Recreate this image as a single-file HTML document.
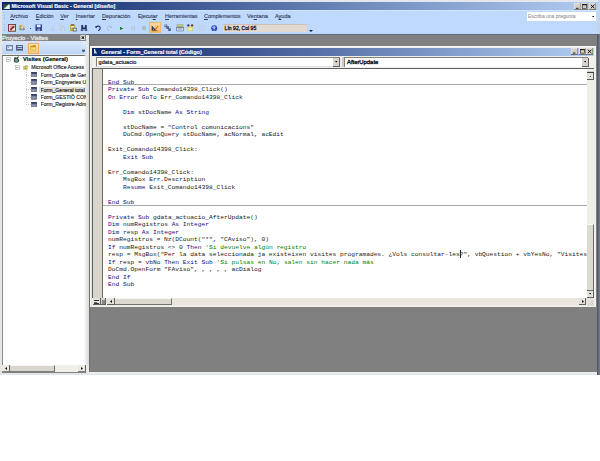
<!DOCTYPE html>
<html><head><meta charset="utf-8">
<style>
html,body{margin:0;padding:0;width:600px;height:461px;overflow:hidden;background:#fff;}
*{box-sizing:border-box;}
.a{position:absolute;}
.s{font-family:"Liberation Sans",sans-serif;white-space:pre;}
.m{font-family:"Liberation Mono",monospace;white-space:pre;}
.c{font-size:6.24px;line-height:7.5px;height:7.5px;color:#181818;}
.k{color:#10107A}
.g{color:#008000}
</style></head><body>
<div class="a" style="left:0.00px;top:0.00px;width:600.00px;height:374.50px;background:#DCE4EC;"></div>
<div class="a" style="left:0.00px;top:0.00px;width:600.00px;height:1.60px;background:#E4E8EC;"></div>
<div class="a" style="left:1.50px;top:1.90px;width:596.00px;height:7.90px;background:linear-gradient(to right,#0A246A 0%,#B2CEF2 100%);"></div>
<svg class="a" style="left:3.3px;top:3.5px;" width="6.8" height="5.6" viewBox="0 0 16 13"><rect x="0" y="0" width="16" height="13" fill="#2A4A3A"/><path d="M0 13 L13 1 L16 1 L16 13Z" fill="#F0F4EC"/><path d="M2 10 L10 3 L12 3 L4 11Z" fill="#8AB890"/></svg>
<div class="a s" style="left:11.50px;top:3.69px;font-size:5.357px;line-height:5.357px;color:#fff;font-weight:bold;-webkit-text-stroke:0.12px;">Microsoft Visual Basic - General [diseño]</div>
<svg class="a" style="left:573.50px;top:2.5px;" width="7.3" height="7" viewBox="0 0 16 16" preserveAspectRatio="none"><rect x="0" y="0" width="16" height="16" fill="#D4D0C8"/><path d="M0 16 V0 H16" stroke="#fff" stroke-width="1.5" fill="none"/><path d="M0 15.3 H15.3 V0" stroke="#404040" stroke-width="1.5" fill="none"/><rect x="4" y="11" width="6" height="2" fill="#000"/></svg>
<svg class="a" style="left:581.15px;top:2.5px;" width="7.3" height="7" viewBox="0 0 16 16" preserveAspectRatio="none"><rect x="0" y="0" width="16" height="16" fill="#D4D0C8"/><path d="M0 16 V0 H16" stroke="#fff" stroke-width="1.5" fill="none"/><path d="M0 15.3 H15.3 V0" stroke="#404040" stroke-width="1.5" fill="none"/><rect x="3.5" y="3.5" width="9" height="8.5" fill="none" stroke="#000" stroke-width="1.2"/><rect x="3.5" y="3" width="9" height="2" fill="#000"/></svg>
<svg class="a" style="left:588.80px;top:2.5px;" width="7.3" height="7" viewBox="0 0 16 16" preserveAspectRatio="none"><rect x="0" y="0" width="16" height="16" fill="#D4D0C8"/><path d="M0 16 V0 H16" stroke="#fff" stroke-width="1.5" fill="none"/><path d="M0 15.3 H15.3 V0" stroke="#404040" stroke-width="1.5" fill="none"/><path d="M4 4 L12 12 M12 4 L4 12" stroke="#000" stroke-width="2"/></svg>
<div class="a" style="left:1.50px;top:10.00px;width:596.00px;height:23.60px;background:#BFD9FC;"></div>
<div class="a" style="left:1.50px;top:10.00px;width:596.00px;height:0.80px;background:#D2E4FC;"></div>
<div class="a" style="left:1.50px;top:33.50px;width:596.00px;height:1.00px;background:#5C6C7C;"></div>
<div class="a" style="left:3.8px;top:12px;width:1.2px;height:7.5px;background:repeating-linear-gradient(#A8BCE0 0 0.8px,transparent 0.8px 1.6px);"></div>
<div class="a" style="left:3.8px;top:24px;width:1.2px;height:8px;background:repeating-linear-gradient(#A8BCE0 0 0.8px,transparent 0.8px 1.6px);"></div>
<div class="a" style="left:0.00px;top:10.00px;width:1.80px;height:24.00px;background:#E2E4E8;"></div>
<div class="a s" style="left:10.30px;top:14.49px;font-size:5.308px;line-height:5.308px;color:#303A58;-webkit-text-stroke:0.25px;-webkit-text-stroke:0.12px;"><u>A</u>rchivo</div>
<div class="a s" style="left:35.80px;top:14.48px;font-size:5.458px;line-height:5.458px;color:#303A58;-webkit-text-stroke:0.25px;-webkit-text-stroke:0.12px;"><u>E</u>dición</div>
<div class="a s" style="left:60.30px;top:14.46px;font-size:5.596px;line-height:5.596px;color:#303A58;-webkit-text-stroke:0.25px;-webkit-text-stroke:0.12px;"><u>V</u>er</div>
<div class="a s" style="left:75.80px;top:14.45px;font-size:5.663px;line-height:5.663px;color:#303A58;-webkit-text-stroke:0.25px;-webkit-text-stroke:0.12px;"><u>I</u>nsertar</div>
<div class="a s" style="left:102.00px;top:14.46px;font-size:5.573px;line-height:5.573px;color:#303A58;-webkit-text-stroke:0.25px;-webkit-text-stroke:0.12px;"><u>D</u>epuración</div>
<div class="a s" style="left:138.00px;top:14.49px;font-size:5.316px;line-height:5.316px;color:#303A58;-webkit-text-stroke:0.25px;-webkit-text-stroke:0.12px;">Ejecut<u>a</u>r</div>
<div class="a s" style="left:165.00px;top:14.48px;font-size:5.415px;line-height:5.415px;color:#303A58;-webkit-text-stroke:0.25px;-webkit-text-stroke:0.12px;"><u>H</u>erramientas</div>
<div class="a s" style="left:204.00px;top:14.48px;font-size:5.427px;line-height:5.427px;color:#303A58;-webkit-text-stroke:0.25px;-webkit-text-stroke:0.12px;"><u>C</u>omplementos</div>
<div class="a s" style="left:247.00px;top:14.44px;font-size:5.721px;line-height:5.721px;color:#303A58;-webkit-text-stroke:0.25px;-webkit-text-stroke:0.12px;">Ve<u>n</u>tana</div>
<div class="a s" style="left:275.00px;top:14.47px;font-size:5.502px;line-height:5.502px;color:#303A58;-webkit-text-stroke:0.25px;-webkit-text-stroke:0.12px;">A<u>y</u>uda</div>
<div class="a" style="left:527.00px;top:12.00px;width:68.50px;height:8.50px;background:#fff;"></div>
<div class="a s" style="left:528.00px;top:14.03px;font-size:5.007px;line-height:5.007px;color:#8C8C8C;-webkit-text-stroke:0.25px;-webkit-text-stroke:0.05px;">Escriba una pregunta</div>
<svg class="a" style="left:591.5px;top:15.5px;" width="2.6" height="1.6" viewBox="0 0 4 2.4"><path d="M0 0 H4 L2 2.4Z" fill="#101020"/></svg>
<svg class="a" style="left:7.7px;top:24.2px;" width="8" height="7.6" viewBox="0 0 16 16"><rect x="0.8" y="0.8" width="14.4" height="14.4" fill="#F0E0E0" stroke="#6A2020" stroke-width="1.8"/><path d="M3 13 C5 8 8 4 13 3 L13 8 C10 9 8 11 7 13Z" fill="#8A2424"/><path d="M3 3 H11 L3 10Z" fill="#D8A8A8"/></svg>
<svg class="a" style="left:18.3px;top:24.3px;" width="8" height="7.4" viewBox="0 0 16 16"><circle cx="5" cy="5" r="3.5" fill="#C8B040"/><circle cx="11" cy="5" r="3.2" fill="#D8C8A0"/><circle cx="5" cy="11" r="3.2" fill="#70A070"/><circle cx="11" cy="11" r="3.2" fill="#A080B0"/><circle cx="8" cy="8" r="2.2" fill="#E8E0B0"/></svg>
<div class="a" style="left:29.60px;top:27.60px;width:1.50px;height:1.50px;background:#1A1A3A;border-radius:0.5px;"></div>
<svg class="a" style="left:35px;top:24.3px;" width="7.4" height="7.4" viewBox="0 0 16 16"><path d="M1 1H15V15H1Z" fill="#2C3C8C"/><rect x="4" y="1.5" width="8" height="5.5" fill="#E8ECF8"/><rect x="5" y="10" width="6" height="5" fill="#8A9AC8"/></svg>
<svg class="a" style="left:50.2px;top:24.8px;" width="5" height="6.6" viewBox="0 0 16 16"><path d="M3 1 L8 10 M13 1 L8 10" stroke="#B8C4D4" stroke-width="2" fill="none"/><circle cx="5" cy="13" r="2.5" fill="none" stroke="#B8C4D4" stroke-width="1.6"/><circle cx="11" cy="13" r="2.5" fill="none" stroke="#B8C4D4" stroke-width="1.6"/></svg>
<svg class="a" style="left:59px;top:24.8px;" width="6.5" height="6.6" viewBox="0 0 16 16"><rect x="1" y="1" width="8" height="10" fill="#D0DAE6" stroke="#B8C4D4"/><rect x="6" y="5" width="8" height="10" fill="#D0DAE6" stroke="#A8B4C4"/></svg>
<svg class="a" style="left:69px;top:24.2px;" width="8.6" height="7.6" viewBox="0 0 16 16"><rect x="1" y="2" width="11" height="13" fill="#C8A848"/><rect x="3" y="0.5" width="7" height="3" fill="#6A5A30"/><rect x="3" y="4" width="7" height="4" fill="#F0E0A0"/><rect x="7" y="8" width="8" height="7.5" fill="#404858"/><rect x="8.5" y="9.5" width="5" height="4.5" fill="#E8ECF0"/></svg>
<svg class="a" style="left:80.3px;top:24.4px;" width="8" height="7.2" viewBox="0 0 16 16"><path d="M2 2H6V6H7V9H9V6H10V2H14V9L15.5 15H9.5V11H6.5V15H0.5L2 9Z" fill="#1E2C64"/><rect x="2.5" y="11" width="2.5" height="2" fill="#8A9AD0"/><rect x="11" y="11" width="2.5" height="2" fill="#8A9AD0"/></svg>
<svg class="a" style="left:95px;top:24.8px;" width="6.4" height="6.6" viewBox="0 0 16 16"><path d="M2.5 6 C3 1.5 12.5 1 13 6.5 C13.3 10 11 12.5 8 14" stroke="#1E2E6A" stroke-width="2.8" fill="none"/><path d="M0 3 L5.5 3 L3 8.5Z" fill="#1E2E6A"/></svg>
<svg class="a" style="left:105.6px;top:24.8px;" width="6" height="6.6" viewBox="0 0 16 16"><path d="M13.5 6 C13 1.5 3.5 1 3 6.5 C2.7 10 5 12.5 8 14" stroke="#A8B4C4" stroke-width="2.4" fill="none"/><path d="M16 3 L10.5 3 L13 8.5Z" fill="#A8B4C4"/></svg>
<svg class="a" style="left:120.2px;top:25.8px;" width="3.4" height="4.8" viewBox="0 0 16 16"><path d="M0 0 L16 8 L0 16Z" fill="#1A7A2A"/></svg>
<svg class="a" style="left:131px;top:26px;" width="4.4" height="4.6" viewBox="0 0 16 16"><rect x="1" y="0" width="5" height="16" fill="#B8C4D4"/><rect x="10" y="0" width="5" height="16" fill="#B8C4D4"/></svg>
<svg class="a" style="left:142px;top:26.2px;" width="4.2" height="4.2" viewBox="0 0 16 16"><rect x="0" y="0" width="16" height="16" fill="#B0BCCC"/></svg>
<div class="a" style="left:149.00px;top:22.40px;width:11.50px;height:10.80px;background:linear-gradient(#FAD8A0,#F6C070);border:0.5px solid #E8B868;"></div>
<svg class="a" style="left:151px;top:24.3px;" width="7.8" height="7.4" viewBox="0 0 16 16"><path d="M1 15 L1 3 L13 15Z" fill="#2A3A6A"/><path d="M4 12 L4 9 L7 12Z" fill="#F6C070"/><path d="M8 11 L14 3 L16 5 L10 13 Z" fill="#E07A10"/><path d="M1 15 H16" stroke="#E08A20" stroke-width="2"/></svg>
<svg class="a" style="left:164.4px;top:24.4px;" width="7.4" height="7.4" viewBox="0 0 16 16"><path d="M1 1 H7 V5 H11 V9 H15 V15 H9 V11 H5 V7 H1Z" fill="#5A6488"/><rect x="2" y="2" width="3" height="2" fill="#C8D0E8"/></svg>
<svg class="a" style="left:175.8px;top:24.4px;" width="8" height="7.4" viewBox="0 0 16 16"><rect x="1" y="1" width="14" height="6" fill="#8A9A50"/><rect x="2" y="2" width="12" height="3" fill="#C8D088"/><rect x="1" y="8" width="14" height="7" fill="#F0F4FC" stroke="#3A4A7A" stroke-width="1.2"/><rect x="3" y="10" width="10" height="1.5" fill="#3A4A7A"/></svg>
<svg class="a" style="left:186.4px;top:24.3px;" width="8.4" height="7.6" viewBox="0 0 16 16"><circle cx="4" cy="3" r="2.5" fill="#3A3A5A"/><circle cx="12" cy="3" r="2.5" fill="#5A3A3A"/><path d="M2 6 H14 L13 15 H3Z" fill="#D8D060"/><path d="M4 8 H12 L11.5 13 H4.5Z" fill="#F4F0A0"/></svg>
<svg class="a" style="left:197.6px;top:25px;" width="8" height="6.4" viewBox="0 0 16 16"><path d="M2 4 L8 1 L14 4 L14 14 L2 14Z" fill="none" stroke="#C0CCDA" stroke-width="1.6"/><path d="M5 8 H11" stroke="#C0CCDA" stroke-width="1.6"/></svg>
<svg class="a" style="left:211.4px;top:24.6px;" width="6.4" height="6.6" viewBox="0 0 16 16"><circle cx="8" cy="8" r="7.5" fill="#2A4AB8"/><circle cx="6.5" cy="6" r="3" fill="#7A9AE8"/><path d="M6 6 C6 3.5 10 3.5 10 6 C10 8 8 8 8 10" stroke="#fff" stroke-width="1.8" fill="none"/><rect x="7" y="11.5" width="2" height="2" fill="#fff"/></svg>
<div class="a" style="left:222.60px;top:23.90px;width:84.40px;height:8.00px;background:#E2DAD0;border-top:0.6px solid #C8C0B8;"></div>
<div class="a s" style="left:224.60px;top:25.92px;font-size:5.091px;line-height:5.091px;color:#181818;-webkit-text-stroke:0.25px;-webkit-text-stroke:0.3px;">Lín 92, Col 95</div>
<div class="a" style="left:309px;top:29.6px;width:0;height:0;border-left:2px solid transparent;border-right:2px solid transparent;border-top:2px solid #202040;"></div>
<div class="a" style="left:88.80px;top:34.50px;width:508.00px;height:337.70px;background:#808080;"></div>
<div class="a" style="left:597.50px;top:0.00px;width:2.50px;height:34.00px;background:#C4D4EC;"></div>
<div class="a" style="left:596.60px;top:34.00px;width:0.80px;height:340.50px;background:#EEEEEE;"></div>
<div class="a" style="left:597.40px;top:34.00px;width:2.60px;height:340.50px;background:linear-gradient(to right,#4A5260,#7A8290);"></div>
<div class="a" style="left:0.00px;top:372.20px;width:596.50px;height:2.10px;background:#ECECEA;"></div>
<div class="a" style="left:0.00px;top:34.50px;width:88.80px;height:339.50px;background:#E4E6E8;"></div>
<div class="a" style="left:84.60px;top:54.50px;width:3.90px;height:310.00px;background:linear-gradient(to right,#F4F4F2,#DEDEDA);"></div>
<div class="a" style="left:86.20px;top:34.50px;width:2.30px;height:20.00px;background:#E6E6E4;"></div>
<div class="a" style="left:86.20px;top:364.50px;width:2.30px;height:9.50px;background:#E6E6E4;"></div>
<div class="a" style="left:88.60px;top:34.50px;width:1.00px;height:337.70px;background:#6E6E6E;"></div>
<div class="a" style="left:1.50px;top:34.10px;width:84.50px;height:6.50px;background:#808080;"></div>
<div class="a s" style="left:2.00px;top:35.72px;font-size:5.926px;line-height:5.926px;color:#E4E4E4;-webkit-text-stroke:0.25px;-webkit-text-stroke:0.3px;">Proyecto - Visites</div>
<svg class="a" style="left:79.5px;top:34.9px;" width="5.8" height="5.2" viewBox="0 0 16 16"><rect x="0.5" y="0.5" width="15" height="15" fill="#F4F4F0" stroke="#C8C8C8"/><path d="M4 4 L12 12 M12 4 L4 12" stroke="#202818" stroke-width="3.6"/></svg>
<div class="a" style="left:1.50px;top:40.60px;width:84.50px;height:13.90px;background:linear-gradient(#D8E8FC,#BCD4F6);"></div>
<div class="a" style="left:80.50px;top:40.60px;width:5.50px;height:13.90px;background:linear-gradient(#E0ECFC,#C4D8F8);"></div>
<svg class="a" style="left:5.6px;top:45px;" width="7.2" height="5.5" viewBox="0 0 16 12"><rect x="0.5" y="0.5" width="15" height="11" fill="#7A90B8" stroke="#4A5A80"/><rect x="3" y="3" width="10" height="6" fill="#E4EAF6"/><rect x="4" y="4" width="3" height="2" fill="#7A90B8"/></svg>
<svg class="a" style="left:16px;top:45px;" width="7.2" height="5.5" viewBox="0 0 16 12"><rect x="0.5" y="0.5" width="15" height="11" fill="#4A5A80" stroke="#3A4A70"/><rect x="3" y="2.5" width="11" height="2" fill="#E4EAF6"/><rect x="3" y="6.5" width="11" height="2" fill="#C4CCE0"/></svg>
<div class="a" style="left:28.00px;top:42.50px;width:11.00px;height:11.00px;background:linear-gradient(#FBE4B4,#F6C878);border:0.7px solid #E8B060;"></div>
<svg class="a" style="left:30.3px;top:45.3px;" width="6.5" height="5.6" viewBox="0 0 16 14"><path d="M1 2 H6 L7.5 0.5 H15 V13 H1Z" fill="#C88A20"/><path d="M1 5 H15 V13 H1Z" fill="#F4C040"/><path d="M3 7 H13 V11 H3Z" fill="#FCE088"/></svg>
<svg class="a" style="left:82px;top:48.8px;" width="3" height="3.4" viewBox="0 0 6 7"><path d="M0 0 H6 M0 3 L3 6.5 L6 3Z" stroke="#2A3A6A" stroke-width="1.2" fill="#2A3A6A"/></svg>
<div class="a" style="left:1.80px;top:54.50px;width:84.20px;height:310.00px;background:#fff;border-left:0.9px solid #8A8A8A;border-top:0.9px solid #707070;"></div>
<div class="a" style="left:84.40px;top:54.50px;width:1.20px;height:310.00px;background:linear-gradient(to right,rgba(255,255,255,0),#ECECEA);"></div>
<svg class="a" style="left:6px;top:57.2px;" width="4.7" height="4.8" viewBox="0 0 16 16"><rect x="1" y="1" width="14" height="14" fill="#fff" stroke="#A8A8A8" stroke-width="2"/><rect x="4" y="7" width="8" height="2.2" fill="#707070"/></svg>
<svg class="a" style="left:13px;top:55.8px;" width="7.2" height="7" viewBox="0 0 16 16"><path d="M2 6 C2 3 6 2 8 4 L12 0.5 L13.5 2 L11 5 C13 7 14 9 14 11 C14 14 11 15.5 8 15.5 C4 15.5 1.5 14 1.5 11Z" fill="#3A4A48"/><path d="M4 8 C5 6 10 6 11 8 C12 11 10 13.5 7.5 13.5 C5 13.5 3.5 11 4 8Z" fill="#7A9A90"/></svg>
<div class="a s" style="left:23.00px;top:57.15px;font-size:5.690px;line-height:5.690px;color:#000;font-weight:bold;-webkit-text-stroke:0.12px;-webkit-text-stroke:0.15px;">Visites (General)</div>
<svg class="a" style="left:14.8px;top:65px;" width="4.8" height="4.8" viewBox="0 0 16 16"><rect x="1" y="1" width="14" height="14" fill="#fff" stroke="#A8A8A8" stroke-width="2"/><rect x="4" y="7" width="8" height="2.2" fill="#707070"/></svg>
<svg class="a" style="left:22.4px;top:64.6px;" width="7" height="5.2" viewBox="0 0 16 16"><path d="M1 3 H6 L7.5 1 H15 V15 H1Z" fill="#B8B060"/><path d="M2 6 H15 V15 H2Z" fill="#E0DC90"/><rect x="5" y="8" width="6" height="4" fill="#7A8A40"/></svg>
<div class="a s" style="left:31.20px;top:65.02px;font-size:5.100px;line-height:5.100px;color:#202020;-webkit-text-stroke:0.25px;-webkit-text-stroke:0.14px;">Microsoft Office Access</div>
<div class="a" style="left:26.3px;top:70px;width:0;height:35px;border-left:0.7px dotted #D0D0D0;"></div>
<div class="a" style="left:39.30px;top:86.60px;width:45.90px;height:6.80px;background:#E2E1DC;"></div>
<div class="a" style="left:26.3px;top:74.50px;width:5px;height:0;border-top:0.7px dotted #D0D0D0;"></div>
<svg class="a" style="left:31.3px;top:71.7px;" width="6.2" height="5.6" viewBox="0 0 16 16"><rect x="0.5" y="0.5" width="15" height="15" fill="#A0A8BC" stroke="#303850" stroke-width="1.4"/><rect x="0.5" y="0.5" width="15" height="4.5" fill="#283058"/><rect x="3" y="7" width="3" height="2" fill="#303850"/><rect x="3" y="11" width="3" height="2" fill="#303850"/><rect x="8" y="7" width="6" height="2" fill="#5A6280"/><rect x="8" y="11" width="6" height="2" fill="#5A6280"/></svg>
<div class="a s" style="left:40.50px;top:72.61px;font-size:5.150px;line-height:5.150px;color:#181818;-webkit-text-stroke:0.25px;-webkit-text-stroke:0.14px;width:45.2px;overflow:hidden;padding-top:2px;margin-top:-2px;padding-bottom:1px;">Form_Copia de Gen</div>
<div class="a" style="left:26.3px;top:81.95px;width:5px;height:0;border-top:0.7px dotted #D0D0D0;"></div>
<svg class="a" style="left:31.3px;top:79.15px;" width="6.2" height="5.6" viewBox="0 0 16 16"><rect x="0.5" y="0.5" width="15" height="15" fill="#A0A8BC" stroke="#303850" stroke-width="1.4"/><rect x="0.5" y="0.5" width="15" height="4.5" fill="#283058"/><rect x="3" y="7" width="3" height="2" fill="#303850"/><rect x="3" y="11" width="3" height="2" fill="#303850"/><rect x="8" y="7" width="6" height="2" fill="#5A6280"/><rect x="8" y="11" width="6" height="2" fill="#5A6280"/></svg>
<div class="a s" style="left:40.50px;top:80.06px;font-size:5.150px;line-height:5.150px;color:#181818;-webkit-text-stroke:0.25px;-webkit-text-stroke:0.14px;width:45.2px;overflow:hidden;padding-top:2px;margin-top:-2px;padding-bottom:1px;">Form_Engnyeries U</div>
<div class="a" style="left:26.3px;top:89.40px;width:5px;height:0;border-top:0.7px dotted #D0D0D0;"></div>
<svg class="a" style="left:31.3px;top:86.60000000000001px;" width="6.2" height="5.6" viewBox="0 0 16 16"><rect x="0.5" y="0.5" width="15" height="15" fill="#A0A8BC" stroke="#303850" stroke-width="1.4"/><rect x="0.5" y="0.5" width="15" height="4.5" fill="#283058"/><rect x="3" y="7" width="3" height="2" fill="#303850"/><rect x="3" y="11" width="3" height="2" fill="#303850"/><rect x="8" y="7" width="6" height="2" fill="#5A6280"/><rect x="8" y="11" width="6" height="2" fill="#5A6280"/></svg>
<div class="a s" style="left:40.50px;top:87.51px;font-size:5.150px;line-height:5.150px;color:#181818;-webkit-text-stroke:0.25px;-webkit-text-stroke:0.14px;width:45.2px;overflow:hidden;padding-top:2px;margin-top:-2px;padding-bottom:1px;">Form_General total</div>
<div class="a" style="left:26.3px;top:96.85px;width:5px;height:0;border-top:0.7px dotted #D0D0D0;"></div>
<svg class="a" style="left:31.3px;top:94.05px;" width="6.2" height="5.6" viewBox="0 0 16 16"><rect x="0.5" y="0.5" width="15" height="15" fill="#A0A8BC" stroke="#303850" stroke-width="1.4"/><rect x="0.5" y="0.5" width="15" height="4.5" fill="#283058"/><rect x="3" y="7" width="3" height="2" fill="#303850"/><rect x="3" y="11" width="3" height="2" fill="#303850"/><rect x="8" y="7" width="6" height="2" fill="#5A6280"/><rect x="8" y="11" width="6" height="2" fill="#5A6280"/></svg>
<div class="a s" style="left:40.50px;top:94.96px;font-size:5.150px;line-height:5.150px;color:#181818;-webkit-text-stroke:0.25px;-webkit-text-stroke:0.14px;width:45.2px;overflow:hidden;padding-top:2px;margin-top:-2px;padding-bottom:1px;">Form_GESTIÓ CONT</div>
<div class="a" style="left:26.3px;top:104.30px;width:5px;height:0;border-top:0.7px dotted #D0D0D0;"></div>
<svg class="a" style="left:31.3px;top:101.5px;" width="6.2" height="5.6" viewBox="0 0 16 16"><rect x="0.5" y="0.5" width="15" height="15" fill="#A0A8BC" stroke="#303850" stroke-width="1.4"/><rect x="0.5" y="0.5" width="15" height="4.5" fill="#283058"/><rect x="3" y="7" width="3" height="2" fill="#303850"/><rect x="3" y="11" width="3" height="2" fill="#303850"/><rect x="8" y="7" width="6" height="2" fill="#5A6280"/><rect x="8" y="11" width="6" height="2" fill="#5A6280"/></svg>
<div class="a s" style="left:40.50px;top:102.41px;font-size:5.150px;line-height:5.150px;color:#181818;-webkit-text-stroke:0.25px;-webkit-text-stroke:0.14px;width:45.2px;overflow:hidden;padding-top:2px;margin-top:-2px;padding-bottom:1px;">Form_Registre Adm</div>
<div class="a" style="left:85.60px;top:54.80px;width:3.00px;height:309.70px;background:linear-gradient(to right,#E8E8E6,#DCDCD8);"></div>
<div class="a" style="left:85.60px;top:364.50px;width:3.00px;height:9.50px;background:#E8E8E6;"></div>
<div class="a" style="left:2.20px;top:364.50px;width:84.10px;height:7.80px;background:#F0EFEA;"></div>
<div class="a" style="left:2.40px;top:364.70px;width:7.20px;height:7.40px;background:#ECEAE2;border-right:0.8px solid #606060;border-bottom:0.8px solid #808080;"></div>
<div class="a" style="left:9.60px;top:364.70px;width:45.20px;height:7.40px;background:#D8D6CE;border-right:0.9px solid #6A6A6A;border-bottom:0.8px solid #808080;border-top:0.6px solid #F4F4F4;"></div>
<svg class="a" style="left:5.2px;top:366.8px;" width="2" height="3" viewBox="0 0 2.5 4"><path d="M2.5 0 V4 L0 2Z" fill="#000"/></svg>
<div class="a" style="left:78.20px;top:364.70px;width:7.60px;height:7.40px;background:#ECEAE2;border-right:0.8px solid #606060;border-bottom:0.8px solid #808080;"></div>
<svg class="a" style="left:80.8px;top:366.8px;" width="2" height="3" viewBox="0 0 2.5 4"><path d="M0 0 V4 L2.5 2Z" fill="#000"/></svg>
<div class="a" style="left:1.80px;top:372.10px;width:84.70px;height:0.80px;background:#808080;"></div>
<div class="a" style="left:90.20px;top:45.80px;width:505.80px;height:261.60px;background:#F0EFEA;"></div>
<div class="a" style="left:90.20px;top:45.80px;width:505.80px;height:1.00px;background:#F8F8F8;"></div>
<div class="a" style="left:90.20px;top:45.80px;width:0.80px;height:261.60px;background:#F4F4F2;"></div>
<div class="a" style="left:90.60px;top:55.70px;width:1.70px;height:251.70px;background:#E0E0DC;"></div>
<div class="a" style="left:92.00px;top:47.50px;width:501.50px;height:8.20px;background:linear-gradient(to right,#0A246A 0%,#B2CEF2 100%);"></div>
<svg class="a" style="left:94px;top:49.2px;" width="3.4" height="4.6" viewBox="0 0 8 11"><path d="M0 0 H3 V4 H5 V7 H8 V11 H0Z" fill="#D8DCE8"/><path d="M4 8 H7 V10 H4Z" fill="#5A6A9A"/></svg>
<div class="a s" style="left:101.00px;top:49.66px;font-size:5.559px;line-height:5.559px;color:#fff;font-weight:bold;-webkit-text-stroke:0.12px;">General - Form_General total (Código)</div>
<svg class="a" style="left:571.00px;top:48.1px;" width="7.2" height="6.8" viewBox="0 0 16 16" preserveAspectRatio="none"><rect x="0" y="0" width="16" height="16" fill="#D4D0C8"/><path d="M0 16 V0 H16" stroke="#fff" stroke-width="1.5" fill="none"/><path d="M0 15.3 H15.3 V0" stroke="#404040" stroke-width="1.5" fill="none"/><rect x="4" y="11" width="6" height="2" fill="#000"/></svg>
<svg class="a" style="left:578.50px;top:48.1px;" width="7.2" height="6.8" viewBox="0 0 16 16" preserveAspectRatio="none"><rect x="0" y="0" width="16" height="16" fill="#D4D0C8"/><path d="M0 16 V0 H16" stroke="#fff" stroke-width="1.5" fill="none"/><path d="M0 15.3 H15.3 V0" stroke="#404040" stroke-width="1.5" fill="none"/><rect x="3.5" y="3.5" width="9" height="8.5" fill="none" stroke="#000" stroke-width="1.2"/><rect x="3.5" y="3" width="9" height="2" fill="#000"/></svg>
<svg class="a" style="left:586.00px;top:48.1px;" width="7.2" height="6.8" viewBox="0 0 16 16" preserveAspectRatio="none"><rect x="0" y="0" width="16" height="16" fill="#D4D0C8"/><path d="M0 16 V0 H16" stroke="#fff" stroke-width="1.5" fill="none"/><path d="M0 15.3 H15.3 V0" stroke="#404040" stroke-width="1.5" fill="none"/><path d="M4 4 L12 12 M12 4 L4 12" stroke="#000" stroke-width="2"/></svg>
<div class="a" style="left:95.80px;top:57.20px;width:244.50px;height:9.80px;background:#fff;border-top:0.9px solid #808080;border-left:0.9px solid #808080;border-bottom:0.6px solid #E0E0E0;"></div>
<div class="a s" style="left:98.60px;top:59.76px;font-size:5.558px;line-height:5.558px;color:#101010;-webkit-text-stroke:0.25px;-webkit-text-stroke:0.18px;">gdata_actuacio</div>
<div class="a" style="left:333.00px;top:57.80px;width:7.30px;height:8.80px;background:#D8D4CC;border-right:0.8px solid #606060;border-bottom:0.8px solid #606060;"></div>
<svg class="a" style="left:335.3px;top:61.4px;" width="2.6" height="1.6" viewBox="0 0 4 2.5"><path d="M0 0 H4 L2 2.5Z" fill="#000"/></svg>
<div class="a" style="left:341.50px;top:57.20px;width:2.10px;height:9.80px;background:#D0CCC4;"></div>
<div class="a" style="left:343.80px;top:57.20px;width:244.70px;height:9.80px;background:#fff;border-top:0.9px solid #808080;border-left:0.9px solid #808080;"></div>
<div class="a s" style="left:347.00px;top:59.73px;font-size:5.865px;line-height:5.865px;color:#000;-webkit-text-stroke:0.25px;-webkit-text-stroke:0.3px;">AfterUpdate</div>
<div class="a" style="left:581.50px;top:57.80px;width:7.00px;height:8.80px;background:#D8D4CC;border-right:0.8px solid #606060;border-bottom:0.8px solid #606060;"></div>
<svg class="a" style="left:583.6px;top:61.4px;" width="2.6" height="1.6" viewBox="0 0 4 2.5"><path d="M0 0 H4 L2 2.5Z" fill="#000"/></svg>
<div class="a" style="left:92.30px;top:68.20px;width:501.70px;height:237.40px;background:#fff;border-top:0.9px solid #606060;border-left:0.9px solid #606060;"></div>
<div class="a" style="left:93.20px;top:69.10px;width:9.80px;height:229.10px;background:#D8D5CC;border-right:0.8px solid #6A6A6A;"></div>
<div class="a" style="left:103.00px;top:84.30px;width:483.50px;height:0.70px;background:#A8A8A8;"></div>
<div class="a" style="left:103.00px;top:204.50px;width:483.50px;height:0.70px;background:#A8A8A8;"></div>
<div class="a" style="left:586.50px;top:69.40px;width:7.50px;height:228.80px;background:#EEEDE6;"></div>
<div class="a" style="left:586.50px;top:71.20px;width:7.50px;height:1.40px;background:#D4D0C8;border-bottom:0.7px solid #404040;"></div>
<div class="a" style="left:586.50px;top:73.00px;width:7.10px;height:7.20px;background:#E4E2DA;border-right:0.8px solid #606060;border-bottom:0.8px solid #606060;"></div>
<svg class="a" style="left:588.8px;top:75.8px;" width="2.6" height="1.6" viewBox="0 0 4 2.5"><path d="M0 2.5 H4 L2 0Z" fill="#000"/></svg>
<div class="a" style="left:586.50px;top:224.00px;width:7.30px;height:66.60px;background:#DCD9D0;border-right:0.9px solid #6A6A6A;border-bottom:0.8px solid #6A6A6A;border-top:0.6px solid #F8F8F4;"></div>
<div class="a" style="left:586.50px;top:290.50px;width:7.10px;height:7.30px;background:#E4E2DA;border-right:0.8px solid #606060;border-bottom:0.8px solid #606060;"></div>
<svg class="a" style="left:588.8px;top:293.3px;" width="2.6" height="1.6" viewBox="0 0 4 2.5"><path d="M0 0 H4 L2 2.5Z" fill="#000"/></svg>
<div class="a" style="left:92.30px;top:298.20px;width:494.20px;height:7.40px;background:#EEEDE6;"></div>
<div class="a" style="left:93.00px;top:298.40px;width:7.50px;height:6.90px;background:#E4E2DA;border-right:0.8px solid #606060;border-bottom:0.8px solid #606060;"></div>
<div class="a" style="left:94.30px;top:300.20px;width:4.70px;height:0.70px;background:#303030;"></div>
<div class="a" style="left:94.30px;top:301.60px;width:3.20px;height:0.60px;background:#707070;"></div>
<div class="a" style="left:94.30px;top:302.90px;width:4.70px;height:0.70px;background:#303030;"></div>
<div class="a" style="left:100.80px;top:298.40px;width:5.70px;height:6.90px;background:#D8D5CC;border-right:0.8px solid #606060;border-bottom:0.8px solid #606060;"></div>
<div class="a" style="left:102.00px;top:300.00px;width:3.00px;height:4.00px;background:#8a8a8a;"></div>
<div class="a" style="left:106.80px;top:298.40px;width:8.00px;height:6.90px;background:#E4E2DA;border-right:0.8px solid #606060;border-bottom:0.8px solid #606060;"></div>
<svg class="a" style="left:110px;top:300.3px;" width="2" height="3" viewBox="0 0 2.5 4"><path d="M2.5 0 V4 L0 2Z" fill="#000"/></svg>
<div class="a" style="left:115.00px;top:298.40px;width:471.50px;height:6.90px;background:#E8E6DE;"></div>
<div class="a" style="left:114.80px;top:298.40px;width:57.70px;height:6.90px;background:#DCD9D0;border-right:0.8px solid #707070;border-bottom:0.8px solid #707070;border-top:0.6px solid #F8F8F8;"></div>
<div class="a" style="left:578.50px;top:298.40px;width:7.80px;height:6.90px;background:#E4E2DA;border-right:0.8px solid #606060;border-bottom:0.8px solid #606060;"></div>
<svg class="a" style="left:581.6px;top:300.3px;" width="2" height="3" viewBox="0 0 2.5 4"><path d="M0 0 V4 L2.5 2Z" fill="#000"/></svg>
<div class="a" style="left:586.50px;top:298.20px;width:7.50px;height:7.40px;background:#E4E2DA;"></div>
<svg class="a" style="left:587px;top:298.6px;" width="6.6" height="6.6" viewBox="0 0 12 12"><path d="M11 3 L3 11 M11 7 L7 11 M11 10 L10 11" stroke="#909090" stroke-width="1"/><path d="M11 4 L4 11 M11 8 L8 11" stroke="#fff" stroke-width="0.8"/></svg>
<div class="a" style="left:102.5px;top:69.4px;width:484px;height:228.8px;overflow:hidden;">
<div class="a m c" style="left:5.50px;top:9.20px;"><span class="k">End</span> <span class="k">Sub</span></div>
<div class="a m c" style="left:5.50px;top:16.70px;"><span class="k">Private</span> <span class="k">Sub</span> Comando14398_Click()</div>
<div class="a m c" style="left:5.50px;top:24.20px;"><span class="k">On</span> <span class="k">Error</span> <span class="k">GoTo</span> Err_Comando14398_Click</div>
<div class="a m c" style="left:5.50px;top:39.20px;">    <span class="k">Dim</span> stDocName <span class="k">As</span> <span class="k">String</span></div>
<div class="a m c" style="left:5.50px;top:54.20px;">    stDocName = &quot;Control comunicacions&quot;</div>
<div class="a m c" style="left:5.50px;top:61.70px;">    DoCmd.OpenQuery stDocName, acNormal, acEdit</div>
<div class="a m c" style="left:5.50px;top:76.70px;">Exit_Comando14398_Click:</div>
<div class="a m c" style="left:5.50px;top:84.20px;">    <span class="k">Exit</span> <span class="k">Sub</span></div>
<div class="a m c" style="left:5.50px;top:99.20px;">Err_Comando14398_Click:</div>
<div class="a m c" style="left:5.50px;top:106.70px;">    MsgBox Err.Description</div>
<div class="a m c" style="left:5.50px;top:114.20px;">    <span class="k">Resume</span> Exit_Comando14398_Click</div>
<div class="a m c" style="left:5.50px;top:129.20px;"><span class="k">End</span> <span class="k">Sub</span></div>
<div class="a m c" style="left:5.50px;top:144.20px;"><span class="k">Private</span> <span class="k">Sub</span> gdata_actuacio_AfterUpdate()</div>
<div class="a m c" style="left:5.50px;top:151.70px;"><span class="k">Dim</span> numRegistros <span class="k">As</span> <span class="k">Integer</span></div>
<div class="a m c" style="left:5.50px;top:159.20px;"><span class="k">Dim</span> resp <span class="k">As</span> <span class="k">Integer</span></div>
<div class="a m c" style="left:5.50px;top:166.70px;">numRegistros = Nz(DCount(&quot;*&quot;, &quot;CAviso&quot;), 0)</div>
<div class="a m c" style="left:5.50px;top:174.20px;"><span class="k">If</span> numRegistros &lt;&gt; 0 <span class="k">Then</span> <span class="g">&#x27;Si devuelve algún registro</span></div>
<div class="a m c" style="left:5.50px;top:181.70px;">resp = MsgBox(&quot;Per la data seleccionada ja existeixen visites programades. ¿Vols consultar-les?&quot;, vbQuestion + vbYesNo, &quot;Visites</div>
<div class="a m c" style="left:5.50px;top:189.20px;"><span class="k">If</span> resp = vbNo <span class="k">Then</span> <span class="k">Exit</span> <span class="k">Sub</span> <span class="g">&#x27;Si pulsas en No, salen sin hacer nada más</span></div>
<div class="a m c" style="left:5.50px;top:196.70px;">DoCmd.OpenForm &quot;FAviso&quot;, , , , , acDialog</div>
<div class="a m c" style="left:5.50px;top:204.20px;"><span class="k">End</span> <span class="k">If</span></div>
<div class="a m c" style="left:5.50px;top:211.70px;"><span class="k">End</span> <span class="k">Sub</span></div>
</div>
<div class="a" style="left:460.10px;top:250.40px;width:0.60px;height:7.70px;background:#202020;"></div>
</body></html>
